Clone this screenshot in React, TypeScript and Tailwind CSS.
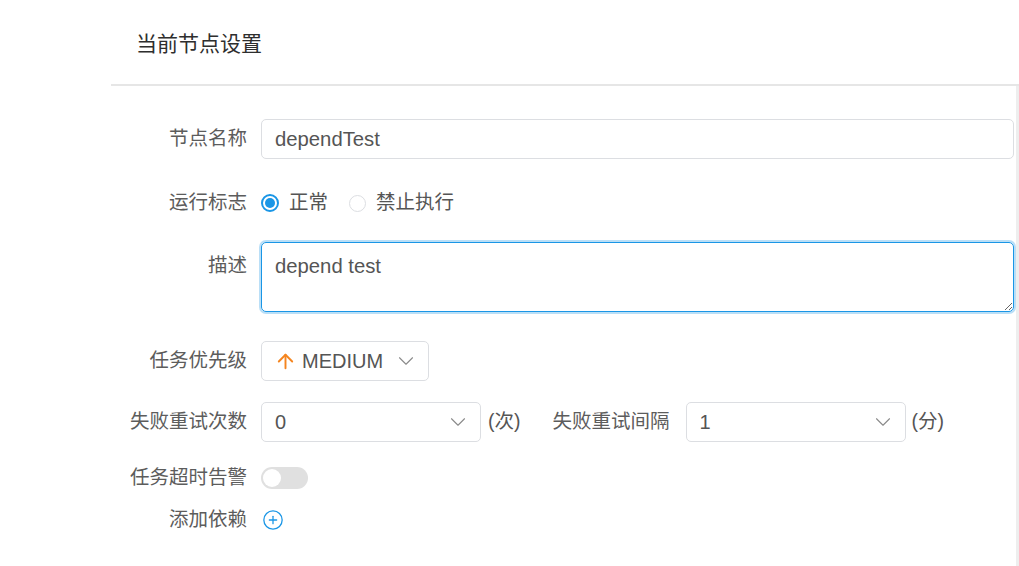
import React from "react";
import { ArrowUp, ChevronDown, CirclePlus } from "lucide-react";

const font = { fontFamily: '"Liberation Sans", "Noto Sans CJK SC", sans-serif' };

function Label({ children, className = "" }: { children: React.ReactNode; className?: string }) {
  return (
    <div className={"w-[150px] shrink-0 pr-[14px] text-right text-[19.5px] text-[#5c5c5c] " + className}>
      {children}
    </div>
  );
}

function Select({ value, width, icon }: { value: string; width: string; icon?: React.ReactNode }) {
  return (
    <div className={"h-[40px] shrink-0 rounded-[5px] border border-[#dcdee2] bg-white flex items-center pl-[13px] pr-[9px] " + width}>
      {icon}
      <span className="flex-1 text-[20px] text-[#555]">{value}</span>
      <ChevronDown size={26} strokeWidth={1} color="#8a8a8a" />
    </div>
  );
}

export default function App() {
  return (
    <div className="w-[1019px] h-[566px] bg-white flex overflow-hidden" style={font}>
      <div className="w-[111px] shrink-0" />
      <div className="flex-1 flex flex-col">
        <div className="h-[84px] shrink-0 flex items-center pl-[25px] pt-[4px]">
          <span className="text-[21px] text-[#2e2e2e]">当前节点设置</span>
        </div>
        <div className="flex flex-1 border-t-2 border-[#e6e6e6]">
          <div className="flex-1 flex flex-col pr-[2px]">
            {/* Row 1 */}
            <div className="mt-[33px] h-[40px] flex items-center">
              <Label>节点名称</Label>
              <div className="flex-1 h-[40px] rounded-[5px] border border-[#dcdee2] flex items-center pl-[13px] pt-[1px] text-[20.3px] text-[#555]">
                dependTest
              </div>
            </div>
            {/* Row 2 */}
            <div className="mt-[24px] h-[40px] flex items-center">
              <Label>运行标志</Label>
              <div className="flex items-center">
                <span className="w-[18px] h-[18px] rounded-full border-2 border-[#1a96e6] flex items-center justify-center">
                  <span className="w-[10px] h-[10px] rounded-full bg-[#1a96e6]" />
                </span>
                <span className="ml-[10px] text-[19.5px] text-[#555]">正常</span>
                <span className="ml-[21px] w-[17px] h-[17px] rounded-full border border-[#dcdee2]" />
                <span className="ml-[10px] text-[19.5px] text-[#555]">禁止执行</span>
              </div>
            </div>
            {/* Row 3 */}
            <div className="mt-[19px] h-[70px] flex items-start">
              <Label className="h-[48px] flex items-center justify-end">描述</Label>
              <textarea
                readOnly
                defaultValue="depend test"
                className="flex-1 h-[70px] rounded-[5px] border-[1.5px] border-[#1a96e6] shadow-[0_0_0_2px_rgba(26,150,230,0.3)] outline-none pl-[13px] pt-[11px] text-[20.3px] leading-[24px] text-[#555] resize-y"
                style={font}
              />
            </div>
            {/* Row 4 */}
            <div className="mt-[29px] h-[40px] flex items-center">
              <Label>任务优先级</Label>
              <Select
                value="MEDIUM"
                width="w-[168px]"
                icon={<ArrowUp size={23} strokeWidth={2} color="#f5851f" className="-ml-[1px] mr-[5px]" />}
              />
            </div>
            {/* Row 5 */}
            <div className="mt-[21px] h-[40px] flex items-center">
              <Label>失败重试次数</Label>
              <Select value="0" width="w-[220px]" />
              <span className="ml-[7px] text-[19.5px] text-[#555]">(次)</span>
              <span className="ml-[32px] text-[19.5px] text-[#5c5c5c]">失败重试间隔</span>
              <div className="ml-[16px]">
                <Select value="1" width="w-[220px]" />
              </div>
              <span className="ml-[6px] text-[19.5px] text-[#555]">(分)</span>
            </div>
            {/* Row 6 */}
            <div className="mt-[16px] h-[40px] flex items-center">
              <Label>任务超时告警</Label>
              <div className="w-[47px] h-[22px] rounded-full bg-[#e0e0e0] flex items-center px-[2px]">
                <span className="w-[18px] h-[18px] rounded-full bg-white" />
              </div>
            </div>
            {/* Row 7 */}
            <div className="mt-[2px] h-[40px] flex items-center">
              <Label>添加依赖</Label>
              <CirclePlus size={22} strokeWidth={1.4} color="#1a96e6" className="ml-[1px]" />
            </div>
          </div>
          <div className="w-[3px] shrink-0 bg-[#eeeeee]" />
        </div>
      </div>
    </div>
  );
}
